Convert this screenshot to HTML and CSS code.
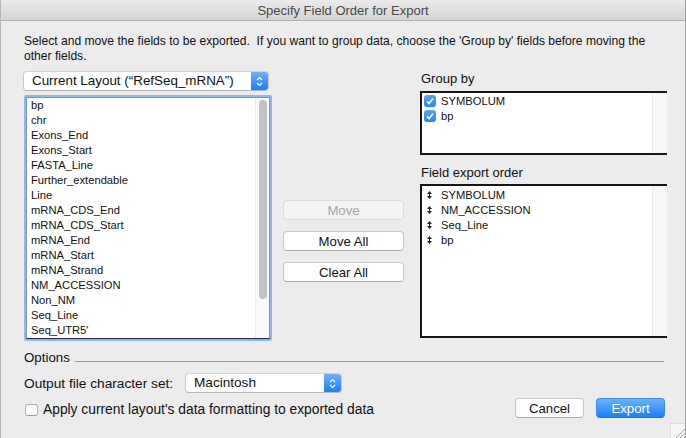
FILE: index.html
```html
<!DOCTYPE html>
<html lang="en">
<head>
<meta charset="utf-8">
<title>Specify Field Order for Export</title>
<link rel="stylesheet" href="styles.css">
</head>
<body>
<div class="window">
  <div class="titlebar">Specify Field Order for Export</div>
  <div class="content">
    <p class="intro">Select and move the fields to be exported.&nbsp; If you want to group data, choose the 'Group by' fields before moving the<br>other fields.</p>
    <div class="main">
      <div class="col-left">
        <div class="popup popup-layout">
          <span class="popup-label">Current Layout (“RefSeq_mRNA”)</span>
          <span class="popup-arrows"><svg width="7" height="11" viewBox="0 0 7 11"><path d="M1 4 L3.5 1.5 L6 4 M1 7 L3.5 9.5 L6 7" fill="none" stroke="#fff" stroke-width="1.2"/></svg></span>
        </div>
        <div class="list-ring">
          <div class="list">
            <ul class="items">
              <li>bp</li>
              <li>chr</li>
              <li>Exons_End</li>
              <li>Exons_Start</li>
              <li>FASTA_Line</li>
              <li>Further_extendable</li>
              <li>Line</li>
              <li>mRNA_CDS_End</li>
              <li>mRNA_CDS_Start</li>
              <li>mRNA_End</li>
              <li>mRNA_Start</li>
              <li>mRNA_Strand</li>
              <li>NM_ACCESSION</li>
              <li>Non_NM</li>
              <li>Seq_Line</li>
              <li>Seq_UTR5'</li>
            </ul>
            <div class="track"><div class="thumb"></div></div>
          </div>
        </div>
      </div>
      <div class="col-mid">
        <button class="btn btn-disabled">Move</button>
        <button class="btn">Move All</button>
        <button class="btn">Clear All</button>
      </div>
      <div class="col-right">
        <div class="label">Group by</div>
        <div class="box box-group">
          <ul class="box-items">
            <li><span class="cb cb-on"><svg width="12" height="12" viewBox="0 0 12 12"><path d="M3 6.4 L5.1 8.5 L9 3.6" fill="none" stroke="#fff" stroke-width="1.6"/></svg></span>SYMBOLUM</li>
            <li><span class="cb cb-on"><svg width="12" height="12" viewBox="0 0 12 12"><path d="M3 6.4 L5.1 8.5 L9 3.6" fill="none" stroke="#fff" stroke-width="1.6"/></svg></span>bp</li>
          </ul>
          <div class="gutter"></div>
        </div>
        <div class="label label-field">Field export order</div>
        <div class="box box-field">
          <ul class="box-items box-items-field">
            <li><span class="drag"><svg width="5" height="8" viewBox="0 0 5 8"><path d="M2.5 0 L5 3 L0 3 Z M0 5 L5 5 L2.5 8 Z M2 3 H3 V5 H2 Z" fill="#222"/></svg></span>SYMBOLUM</li>
            <li><span class="drag"><svg width="5" height="8" viewBox="0 0 5 8"><path d="M2.5 0 L5 3 L0 3 Z M0 5 L5 5 L2.5 8 Z M2 3 H3 V5 H2 Z" fill="#222"/></svg></span>NM_ACCESSION</li>
            <li><span class="drag"><svg width="5" height="8" viewBox="0 0 5 8"><path d="M2.5 0 L5 3 L0 3 Z M0 5 L5 5 L2.5 8 Z M2 3 H3 V5 H2 Z" fill="#222"/></svg></span>Seq_Line</li>
            <li><span class="drag"><svg width="5" height="8" viewBox="0 0 5 8"><path d="M2.5 0 L5 3 L0 3 Z M0 5 L5 5 L2.5 8 Z M2 3 H3 V5 H2 Z" fill="#222"/></svg></span>bp</li>
          </ul>
          <div class="gutter"></div>
        </div>
      </div>
    </div>
    <div class="options-head"><span class="options-title">Options</span><span class="rule"></span></div>
    <div class="charset-row">
      <span class="charset-label">Output file character set:</span>
      <div class="popup popup-charset">
        <span class="popup-label">Macintosh</span>
        <span class="popup-arrows"><svg width="7" height="11" viewBox="0 0 7 11"><path d="M1 4 L3.5 1.5 L6 4 M1 7 L3.5 9.5 L6 7" fill="none" stroke="#fff" stroke-width="1.2"/></svg></span>
      </div>
    </div>
    <div class="footer-row">
      <label class="apply"><span class="cb cb-off"></span>Apply current layout's data formatting to exported data</label>
      <div class="actions">
        <button class="btn btn-cancel">Cancel</button>
        <button class="btn btn-export">Export</button>
      </div>
    </div>
  </div>
  <div class="grip"><svg width="15" height="15" viewBox="0 0 15 15"><path d="M4 15 L15 4 M8 15 L15 8 M12 15 L15 12" stroke="#a9a9a9" stroke-width="1"/></svg></div>
</div>
</body>
</html>
```

FILE: styles.css
```css
* { box-sizing: border-box; }

html, body {
  margin: 0;
  padding: 0;
  background: #ececec;
}

body {
  font-family: "Liberation Sans", Arial, sans-serif;
  font-size: 11.2px;
  color: #111;
}

.window {
  position: relative;
  width: 686px;
  height: 438px;
  background: #ececec;
  border-left: 1px solid #b8b8b8;
  border-right: 1px solid #a6a6a6;
  overflow: hidden;
}

.titlebar {
  height: 21px;
  line-height: 21px;
  text-align: center;
  font-size: 13px;
  color: #4a4a4a;
  background: linear-gradient(#ebebeb, #d4d4d4);
  border-bottom: 1px solid #b1b1b1;
}

.content {
  padding: 13px 21px 0 22px;
}

.intro {
  margin: 0 0 7px 1px;
  line-height: 15px;
  font-size: 12.1px;
}

.main {
  display: flex;
  align-items: flex-start;
}

.col-left {
  width: 249px;
  display: flex;
  flex-direction: column;
  gap: 4px;
}

.popup {
  display: flex;
  align-items: stretch;
  height: 20px;
  background: #fff;
  border: 1px solid #c9c9c9;
  border-top-color: #d2d2d2;
  border-bottom-color: #b5b5b5;
  border-radius: 4px;
  overflow: hidden;
}

.popup-layout { width: 246px; }

.popup-label {
  flex: 1;
  line-height: 18px;
  padding-left: 8px;
  font-size: 13.4px;
  color: #111;
  white-space: nowrap;
}

.popup-arrows {
  width: 17px;
  display: flex;
  align-items: center;
  justify-content: center;
  background: linear-gradient(#6eb0fa, #1f7ff5);
}

.list-ring {
  margin-left: 1px;
  width: 248px;
  height: 246px;
  border: 2px solid #8db8ef;
  border-radius: 2px;
}

.list {
  display: flex;
  height: 100%;
  background: #fff;
  border: 1px solid #7d93b8;
  border-bottom-color: #1d2a40;
}

.items {
  flex: 1;
  list-style: none;
  margin: 0;
  padding: 0 0 0 4px;
}

.items li {
  height: 15px;
  line-height: 14px;
  white-space: nowrap;
}

.track {
  width: 14px;
  background: #fafafa;
  border-left: 1px solid #ececec;
  padding: 2px 0 0 3px;
}

.thumb {
  width: 8px;
  height: 199px;
  border-radius: 4px;
  background: #c2c2c2;
}

.col-mid {
  width: 121px;
  margin-left: 11px;
  padding-top: 129px;
  display: flex;
  flex-direction: column;
  gap: 11px;
}

.btn {
  display: block;
  height: 20px;
  padding: 0;
  font-family: "Liberation Sans", Arial, sans-serif;
  font-size: 13.2px;
  color: #111;
  background: #fff;
  border: 1px solid #c8c8c8;
  border-bottom-color: #adadad;
  border-radius: 4px;
  text-align: center;
}

.col-mid .btn { width: 121px; }

.btn-disabled {
  background: #f3f3f3;
  color: #a7a7a7;
  border-color: #dadada;
}

.col-right {
  width: 247px;
  margin-left: 16px;
}

.label {
  height: 15px;
  line-height: 15px;
  padding-left: 1px;
  font-size: 13px;
  margin-bottom: 5px;
}

.label-field {
  margin-top: 10px;
  margin-bottom: 4px;
}

.box {
  display: flex;
  width: 247px;
  background: #fff;
  border-top: 2px solid #161616;
  border-left: 2px solid #161616;
  border-bottom: 2px solid #161616;
}

.box-group { height: 64px; }
.box-field { height: 154px; }

.box-items {
  flex: 1;
  list-style: none;
  margin: 0;
  padding: 0 0 0 2px;
}

.box-items-field { padding-top: 1px; }

.box-items li {
  display: flex;
  align-items: center;
  height: 15px;
  white-space: nowrap;
}

.gutter {
  width: 15px;
  background: #f7f7f7;
  border-left: 1px solid #ebebeb;
}

.cb {
  display: inline-flex;
  align-items: center;
  justify-content: center;
  width: 12px;
  height: 12px;
  border-radius: 3px;
  margin-right: 5px;
  flex: none;
}

.cb-on {
  background: linear-gradient(#5aa3f8, #2a86f4);
}

.cb-off {
  width: 13px;
  background: #fff;
  border: 1px solid #b3b3b3;
  border-bottom-color: #a0a0a0;
}

.drag {
  display: inline-flex;
  width: 5px;
  height: 8px;
  margin: 0 9px 0 3px;
}

.drag svg { display: block; }

.options-head {
  display: flex;
  align-items: flex-start;
  margin-top: 9px;
  height: 15px;
  line-height: 15px;
  font-size: 13.3px;
}

.options-title { padding-left: 1px; }

.rule {
  flex: 1;
  margin: 11px 0 0 5px;
  border-top: 1px solid #9b9b9b;
}

.charset-row {
  display: flex;
  align-items: center;
  margin-top: 8px;
  font-size: 13.7px;
}

.charset-label {
  width: 162px;
  padding-left: 1px;
}

.popup-charset { width: 157px; }

.popup-charset .popup-label { font-size: 13.6px; }

.footer-row {
  display: flex;
  align-items: flex-start;
  margin-top: 5px;
}

.apply {
  display: flex;
  align-items: center;
  flex: 1;
  margin-top: 4px;
  margin-left: 2px;
  height: 15px;
  font-size: 13.8px;
}

.apply .cb { margin-right: 5px; }

.actions {
  display: flex;
  gap: 12px;
  margin-right: -1px;
}

.btn-cancel { width: 69px; }

.btn-export {
  width: 69px;
  color: #fff;
  background: linear-gradient(#6ab2fa, #1b80f5);
  border: 1px solid #3d8ced;
  border-bottom-color: #2573dc;
}

.grip {
  position: absolute;
  right: 0;
  bottom: 0;
  width: 15px;
  height: 15px;
  background: #f6f6f6;
  border-left: 1px solid #dedede;
  border-top: 1px solid #dedede;
}

.grip svg { display: block; }
```
